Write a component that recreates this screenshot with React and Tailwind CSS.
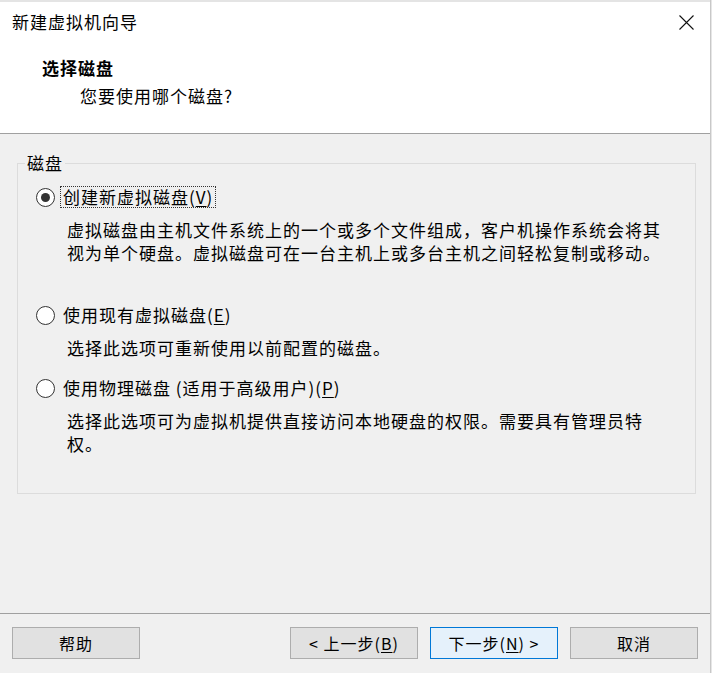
import React from "react";

function Radio({ checked }) {
  return (
    <span className="w-[19px] h-[19px] rounded-full border border-[#333333] bg-white flex items-center justify-center shrink-0">
      {checked && <span className="w-[9px] h-[9px] rounded-full bg-[#333333]" />}
    </span>
  );
}

function Option({ checked, focused, label, hotkey, children, gapTop }) {
  return (
    <div className={gapTop}>
      <div className="flex items-center gap-[5px] h-[22px]">
        <Radio checked={checked} />
        <span
          className={
            "px-[2px] leading-[20px] border border-dotted whitespace-nowrap " +
            (focused ? "border-[#333333]" : "border-transparent")
          }
        >
          {label}(<span className="underline underline-offset-2">{hotkey}</span>)
        </span>
      </div>
      <div className="pl-[31px] mt-[10px] leading-[23px] whitespace-nowrap">{children}</div>
    </div>
  );
}

function Button({ primary, children }) {
  return (
    <button
      className={
        "w-[128px] h-[32px] border flex items-center justify-center text-[16px] tracking-[1px] text-black " +
        (primary ? "bg-[#e5f1fb] border-[#0078d7]" : "bg-[#e1e1e1] border-[#adadad]")
      }
    >
      {children}
    </button>
  );
}

export default function App() {
  return (
    <div className="w-[712px] h-[673px] flex bg-[#f0f0f0] text-black font-['Noto_Sans_CJK_SC',sans-serif] text-[17px] tracking-[1px] overflow-hidden">
      <div className="w-[710px] flex flex-col">
        <div className="h-[2px] bg-[#e4e4e4]" />

        {/* header */}
        <div className="bg-white h-[132px] border-b border-[#a0a0a0] flex flex-col">
          <div className="h-[40px] flex items-center justify-between pl-[12px] pr-[16px]">
            <span className="leading-[22px]">新建虚拟机向导</span>
            <svg width="15" height="15" viewBox="0 0 15 15" fill="none" stroke="#111" strokeWidth="1.1">
              <path d="M0.5 0.5L14.5 14.5M14.5 0.5L0.5 14.5" />
            </svg>
          </div>
          <div className="pl-[42px] mt-[15px] leading-[22px] font-bold">选择磁盘</div>
          <div className="pl-[80px] mt-[6px] leading-[22px]">您要使用哪个磁盘?</div>
        </div>

        {/* body */}
        <fieldset className="mt-[18px] ml-[17px] w-[679px] border border-[#dcdcdc] pb-[38px]">
          <legend className="ml-[7px] px-[2px] leading-[22px]">磁盘</legend>
          <div className="pl-[18px]">
            <Option checked focused label="创建新虚拟磁盘" hotkey="V" gapTop="mt-[12px]">
              虚拟磁盘由主机文件系统上的一个或多个文件组成，客户机操作系统会将其
              <br />
              视为单个硬盘。虚拟磁盘可在一台主机上或多台主机之间轻松复制或移动。
            </Option>
            <Option label="使用现有虚拟磁盘" hotkey="E" gapTop="mt-[40px]">
              选择此选项可重新使用以前配置的磁盘。
            </Option>
            <Option label="使用物理磁盘 (适用于高级用户)" hotkey="P" gapTop="mt-[18px]">
              选择此选项可为虚拟机提供直接访问本地硬盘的权限。需要具有管理员特
              <br />
              权。
            </Option>
          </div>
        </fieldset>

        <div className="flex-1" />

        {/* footer */}
        <div className="border-t border-[#a0a0a0] pt-[13px] pb-[14px] px-[12px] flex items-center">
          <Button>帮助</Button>
          <div className="flex-1" />
          <div className="flex gap-[12px]">
            <Button>
              &lt; 上一步(<span className="underline underline-offset-2">B</span>)
            </Button>
            <Button primary>
              下一步(<span className="underline underline-offset-2">N</span>) &gt;
            </Button>
            <Button>取消</Button>
          </div>
        </div>
      </div>
      <div className="w-[2px] bg-[#e6e6e6] border-l border-[#c8c8c8]" />
    </div>
  );
}
